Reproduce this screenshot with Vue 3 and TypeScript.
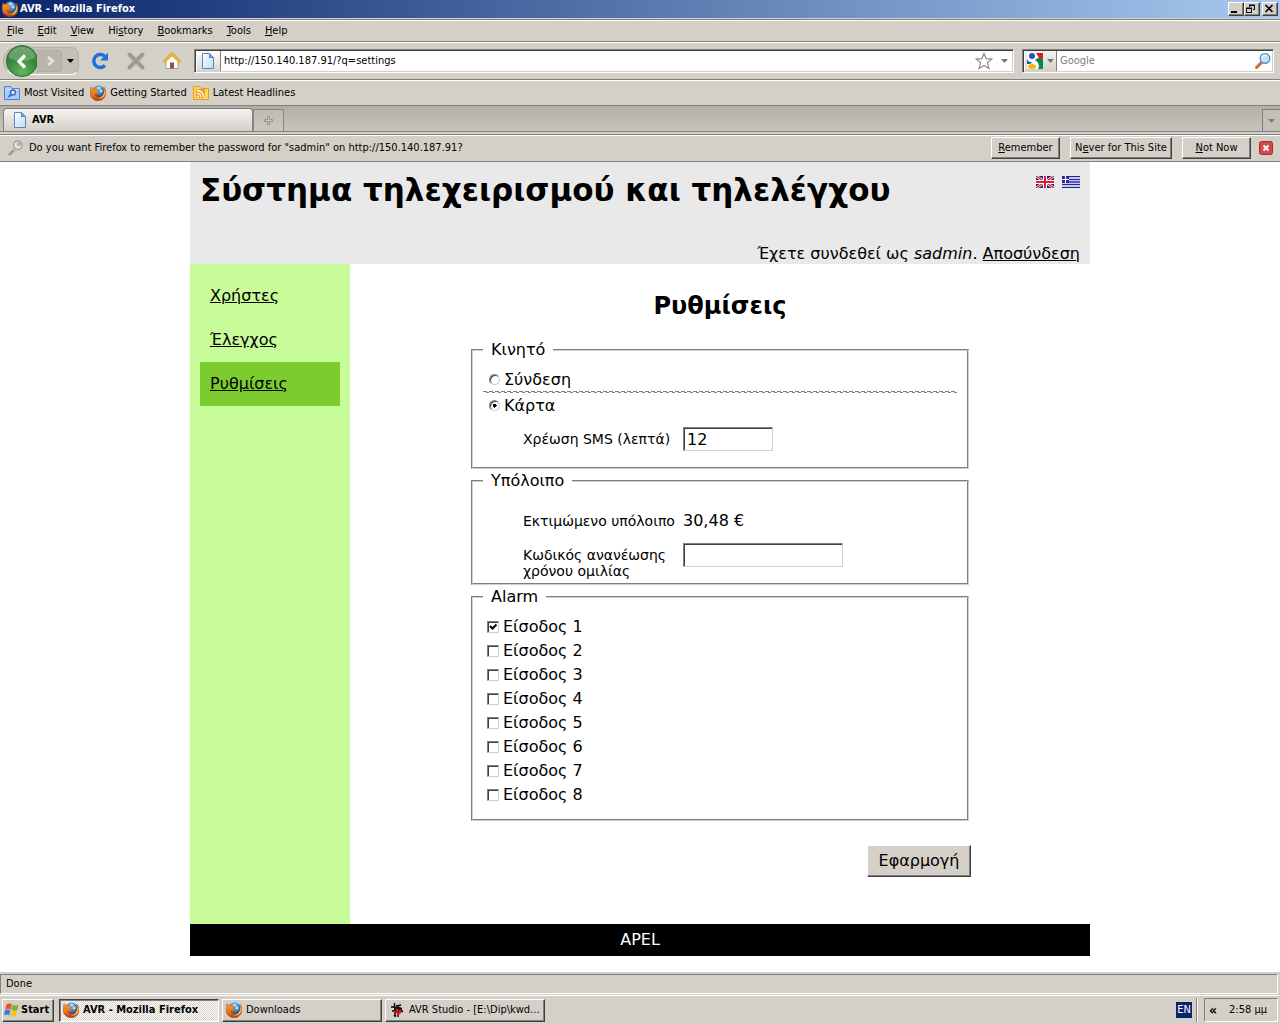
<script setup lang="ts">
import { ref } from 'vue'

interface MenuEntry { key: string; rest: string; before: string }

const menus: MenuEntry[] = [
  { before: '', key: 'F', rest: 'ile' },
  { before: '', key: 'E', rest: 'dit' },
  { before: '', key: 'V', rest: 'iew' },
  { before: 'Hi', key: 's', rest: 'tory' },
  { before: '', key: 'B', rest: 'ookmarks' },
  { before: '', key: 'T', rest: 'ools' },
  { before: '', key: 'H', rest: 'elp' },
]

const bookmarks = [
  { label: 'Most Visited', icon: 'smart-folder' },
  { label: 'Getting Started', icon: 'firefox' },
  { label: 'Latest Headlines', icon: 'feed' },
]

const tasks = [
  { label: 'AVR - Mozilla Firefox', icon: 'firefox', active: true },
  { label: 'Downloads', icon: 'firefox', active: false },
  { label: 'AVR Studio - [E:\\Dip\\kwd...', icon: 'bug', active: false },
]

const sections = [
  { label: 'Χρήστες', current: false },
  { label: 'Έλεγχος', current: false },
  { label: 'Ρυθμίσεις', current: true },
]

const url = ref('http://150.140.187.91/?q=settings')
const search = ref('')
const mode = ref('card')
const smsPrice = ref('12')
const renewCode = ref('')
const alarms = ref(Array.from({ length: 8 }, (_, i) => ({ id: i + 1, on: i === 0 })))
</script>

<template>
  <svg class="defs" aria-hidden="true">
    <defs>
      <radialGradient id="g-globe" cx="0.45" cy="0.3" r="0.7">
        <stop offset="0" stop-color="#9fdcf7" />
        <stop offset="0.5" stop-color="#3a8fd6" />
        <stop offset="1" stop-color="#14306f" />
      </radialGradient>
      <linearGradient id="g-fox" x1="0" y1="0" x2="0" y2="1">
        <stop offset="0" stop-color="#f0a030" />
        <stop offset="0.6" stop-color="#e8731a" />
        <stop offset="1" stop-color="#b83a10" />
      </linearGradient>
      <radialGradient id="g-back" cx="0.5" cy="0.85" r="0.85">
        <stop offset="0" stop-color="#5fb85a" />
        <stop offset="0.6" stop-color="#35853a" />
        <stop offset="1" stop-color="#4c8f50" />
      </radialGradient>
      <linearGradient id="g-page" x1="0" y1="0" x2="1" y2="1">
        <stop offset="0" stop-color="#ffffff" />
        <stop offset="1" stop-color="#bcdcf8" />
      </linearGradient>
      <symbol id="firefox" viewBox="0 0 16 16">
        <circle cx="8.4" cy="7" r="6.4" fill="url(#g-globe)" />
        <path d="M8 1.8l2.5.4-.6 1.6-2 .6zM10.5 4.5l2 .5-.5 2.5-2-.5z" fill="#bdeafa" />
        <path d="M1.200 1.400C.3 3.600 0 5.700.1 8c.2 4.600 3.600 7.800 8 7.800s7.700-3.200 7.800-7.500c.1-2.600-.6-4.700-2.200-6.300.6 1.700.8 3 .3 4.500-.2 3.400-2.300 5.500-5.200 5.500-2.300 0-3.600-1.300-3.800-2.900 1.200.6 2.200.3 3.200-.5l1.300-.4c-.1-.7-1-1.200-2-1.200.1-.9.700-1.500 1.500-2C7.800 5 6.700 4.500 5.900 3.600 4.800 2.900 3.700 3 2.800 3.600 1.900 3 1.400 2.300 1.200 1.400z" fill="url(#g-fox)" stroke="#9c3a12" stroke-width=".4" />
        <path d="M14.300 5c.4 4-1.800 7.800-5.800 8.200 3 1 6-1.300 6.400-4.500.1-1.400 0-2.600-.6-3.700z" fill="#fbd25c" />
      </symbol>
      <symbol id="page" viewBox="0 0 16 16">
        <path d="M2.500.5h7l4 4v11h-11z" fill="url(#g-page)" stroke="#5a86b8" />
        <path d="M9.500.5v4h4z" fill="#6ea7e0" stroke="#5a86b8" />
      </symbol>
      <symbol id="smart-folder" viewBox="0 0 16 16">
        <path d="M.5 1.500h6l1.500 2h7.500v11H.5z" fill="#a9cbfb" stroke="#4a80dc" />
        <path d="M1.500 4.500h13" stroke="#d9e9ff" />
        <circle cx="9" cy="7.500" r="2.500" fill="#dcebff" stroke="#3b68b8" stroke-width="1.400" />
        <path d="M7 9.500L4.500 12" stroke="#3b68b8" stroke-width="1.800" />
      </symbol>
      <symbol id="feed" viewBox="0 0 16 16">
        <path d="M.5 1.500h6l1.500 2h7.500v11H.5z" fill="#ffd75a" stroke="#dda21c" />
        <path d="M3 4h9v9H3z" fill="#f49a2c" />
        <circle cx="5" cy="11.500" r="1" fill="#fff" />
        <path d="M4 8.300a4 4 0 0 1 4 4M4 5.500a7 7 0 0 1 7 7" fill="none" stroke="#fff" stroke-width="1.300" />
      </symbol>
      <symbol id="bug" viewBox="0 0 16 16">
        <path d="M5.500 1v4M2 5h4M7 4l5-1M5 9H3M6 10v5M7 14l-2-1M9 12v3M12 8l2 2" fill="none" stroke="#000" stroke-width="1.400" />
        <path d="M5 5l4-1 4 2v4l-4 2-4-3z" fill="#181818" />
        <path d="M7 7h2v1h3v3l-2 1.500-3-1.500z" fill="#e81010" />
        <path d="M9 9h1v1H9zM10 6h1v1h-1z" fill="#181818" />
      </symbol>
      <symbol id="windows" viewBox="0 0 16 16">
        <path d="M2.500 2.500C4.500 1 6 1.400 7.800 2.400L6.600 7.400C4.800 6.400 3.300 6.300 1.200 7.500z" fill="#e8542a" />
        <path d="M8.600 2.800c2 1 3.800 1 6-.3l-1.200 5.200c-2 1.200-3.800 1.200-6 .2z" fill="#74b82a" />
        <path d="M1 8.400c2-1.200 3.600-1.100 5.400-.1l-1.200 5c-1.800-1-3.400-1-5.200.1z" fill="#3f78e0" />
        <path d="M7.200 8.700c2 1 3.900 1 6-.2L12 13.700c-2 1.200-4 1.200-6 .1z" fill="#f8c418" />
      </symbol>
    </defs>
  </svg>

  <div class="desktop">
    <header class="titlebar">
      <svg class="icon"><use href="#firefox" /></svg>
      <span class="title">AVR - Mozilla Firefox</span>
      <button class="win" type="button" aria-label="Minimize">
        <svg viewBox="0 0 12 10"><path d="M2 8h6" stroke="#000" stroke-width="2" /></svg>
      </button>
      <button class="win" type="button" aria-label="Restore">
        <svg viewBox="0 0 12 10"><path d="M4.500 3V1.500h5v4H8M4 1h6M1.500 4.500h5v4h-5zM1 4h6" fill="none" stroke="#000" /></svg>
      </button>
      <button class="win close" type="button" aria-label="Close">
        <svg viewBox="0 0 12 10"><path d="M2.500 1l7 7M9.500 1l-7 7" stroke="#000" stroke-width="1.600" /></svg>
      </button>
    </header>

    <nav class="menubar">
      <a v-for="m in menus" :key="m.rest" href="#">{{ m.before }}<u>{{ m.key }}</u>{{ m.rest }}</a>
    </nav>

    <div class="navbar">
      <div class="history">
        <button class="back" type="button" aria-label="Back">
          <svg viewBox="0 0 34 34">
            <circle cx="17" cy="17" r="15.500" fill="url(#g-back)" stroke="#2f6e35" />
            <path d="M4 14a13 11 0 0 1 26 0c-8 4-18 4-26 0z" fill="#fff" opacity=".22" />
            <path d="M20 11.500l-6 6 6 6" fill="none" stroke="#fff" stroke-width="3.200" />
          </svg>
        </button>
        <button class="forward" type="button" aria-label="Forward">
          <svg viewBox="0 0 24 22"><path d="M11 6.500l5 4.500-5 4.500" fill="none" stroke="#e4e2de" stroke-width="3" /></svg>
        </button>
        <button class="recent" type="button" aria-label="Recent pages">
          <svg viewBox="0 0 7 4"><path d="M0 0h7L3.500 4z" fill="#000" /></svg>
        </button>
      </div>
      <button class="tool reload" type="button" aria-label="Reload">
        <svg viewBox="0 0 20 20">
          <path d="M15 14.500A6.500 6.500 0 1 1 14.500 5" fill="none" stroke="#1f6fe0" stroke-width="3.400" />
          <path d="M18 1.500v8h-8z" fill="#1f6fe0" />
        </svg>
      </button>
      <button class="tool" type="button" aria-label="Stop">
        <svg viewBox="0 0 20 20"><path d="M3.500 3.500l13 13M16.500 3.500l-13 13" stroke="#9c9a96" stroke-width="4" stroke-linecap="round" /></svg>
      </button>
      <button class="tool" type="button" aria-label="Home">
        <svg viewBox="0 0 20 20">
          <path d="M4 10v7.500h12V10l-6-6z" fill="#fdfdfd" stroke="#98a4b4" />
          <path d="M8 11.500h4v6H8z" fill="#8a5a34" />
          <path d="M1.800 11L10 3l8.200 8" fill="none" stroke="#d98a10" stroke-width="3" />
          <path d="M1.800 11L10 3l8.200 8" fill="none" stroke="#fcc63a" stroke-width="1.600" />
        </svg>
      </button>
      <div class="urlbox">
        <span class="identity"><svg class="icon"><use href="#page" /></svg></span>
        <input v-model="url" type="text" aria-label="Location">
        <svg class="star" viewBox="0 0 18 18"><path d="M9 1.500l2.200 5.200 5.600.4-4.300 3.700 1.400 5.600L9 13.400l-4.900 3 1.400-5.600L1.200 7.100l5.600-.4z" fill="#fff" stroke="#8a8a8a" stroke-width="1.200" /></svg>
        <svg class="arrow" viewBox="0 0 7 4"><path d="M0 0h7L3.500 4z" fill="#777" /></svg>
      </div>
      <div class="searchbox">
        <button class="engine" type="button" aria-label="Search engine">
          <svg class="icon" viewBox="0 0 16 16">
            <path d="M0 0h16v16H0z" fill="#fff" />
            <path d="M9 0h7v6l-4-1z" fill="#e8141c" />
            <path d="M8 7q4-4 8-1v10h-5q3-5-3-9z" fill="#0a8a3c" />
            <circle cx="5" cy="3" r="3" fill="#1c56c0" />
            <path d="M0 6q2 4 6 3L3 11H0z" fill="#1c56c0" />
            <ellipse cx="5" cy="13.500" rx="4" ry="2.500" fill="#f6b414" />
          </svg>
          <svg class="arrow" viewBox="0 0 7 4"><path d="M0 0h7L3.500 4z" fill="#777" /></svg>
        </button>
        <input v-model="search" type="text" placeholder="Google" aria-label="Search">
        <svg class="icon" viewBox="0 0 16 16">
          <path d="M6.500 9.500L1.500 14.500" stroke="#c0703a" stroke-width="3" stroke-linecap="round" />
          <circle cx="10" cy="5.500" r="4.800" fill="#bfe3fb" stroke="#5c8fcc" stroke-width="1.400" />
          <path d="M7 5a3 3 0 0 1 5-2" fill="none" stroke="#fff" stroke-width="1.400" />
        </svg>
      </div>
    </div>

    <nav class="bookmarks">
      <a v-for="b in bookmarks" :key="b.label" href="#">
        <svg class="icon"><use :href="'#' + b.icon" /></svg>{{ b.label }}
      </a>
    </nav>

    <div class="tabs">
      <button class="tab" type="button">
        <svg class="icon"><use href="#page" /></svg>AVR
      </button>
      <button class="newtab" type="button" aria-label="New tab">
        <svg viewBox="0 0 9 9"><path d="M3.500.5h2v3h3v2h-3v3h-2v-3h-3v-2h3z" fill="#c8c5c0" stroke="#8a8782" stroke-width=".8" /></svg>
      </button>
      <button class="alltabs" type="button" aria-label="List all tabs">
        <svg class="arrow" viewBox="0 0 7 4"><path d="M0 0h7L3.500 4z" fill="#807d78" /></svg>
      </button>
    </div>

    <div class="notice">
      <svg class="icon" viewBox="0 0 16 16">
        <path d="M7.500 8.500L1.500 14.500H4v-1.500h1.500v-1.500H7l2-2" fill="#e4e2de" stroke="#858585" />
        <circle cx="10.800" cy="5.200" r="4.300" fill="#e4e2de" stroke="#858585" />
        <circle cx="12" cy="4" r="1.400" fill="#fff" stroke="#858585" />
      </svg>
      <span class="question">Do you want Firefox to remember the password for "sadmin" on http://150.140.187.91?</span>
      <button class="raised small" type="button"><u>R</u>emember</button>
      <button class="raised wide" type="button">N<u>e</u>ver for This Site</button>
      <button class="raised small" type="button"><u>N</u>ot Now</button>
      <button class="dismiss" type="button" aria-label="Close notification">
        <svg viewBox="0 0 14 14">
          <rect x=".5" y=".5" width="13" height="13" rx="2" fill="#d8454a" stroke="#a02c34" />
          <path d="M4.500 4.500l5 5M9.500 4.500l-5 5" stroke="#fff" stroke-width="2" />
        </svg>
      </button>
    </div>

    <div class="viewport">
      <div class="site">
        <header class="masthead">
          <div class="top">
            <h1>Σύστημα τηλεχειρισμού και τηλελέγχου</h1>
            <div class="flags">
              <a href="#" aria-label="English">
                <svg viewBox="0 0 18 12">
                  <path d="M0 0h18v12H0z" fill="#26297a" />
                  <path d="M0 0l18 12M18 0L0 12" stroke="#fff" stroke-width="2.600" />
                  <path d="M0 0l18 12M18 0L0 12" stroke="#d8202c" stroke-width="1.200" />
                  <path d="M9 0v12M0 6h18" stroke="#fff" stroke-width="4" />
                  <path d="M9 0v12M0 6h18" stroke="#d8202c" stroke-width="2" />
                </svg>
              </a>
              <a href="#" aria-label="Ελληνικά">
                <svg viewBox="0 0 18 12">
                  <path d="M0 0h18v12H0z" fill="#fff" />
                  <path d="M0 .5h18M0 3.500h18M0 6h18M0 8.500h18M0 11.300h18" stroke="#24249c" stroke-width="1.300" />
                  <path d="M0 0h7v7H0z" fill="#24249c" />
                  <path d="M3.500 0v7M0 3.500h7" stroke="#fff" stroke-width="1.200" />
                </svg>
              </a>
            </div>
          </div>
          <p>Έχετε συνδεθεί ως <em>sadmin</em>. <a href="#">Αποσύνδεση</a></p>
        </header>

        <div class="body">
          <nav class="side">
            <a v-for="s in sections" :key="s.label" href="#" :class="{ current: s.current }">{{ s.label }}</a>
          </nav>
          <main>
            <h2>Ρυθμίσεις</h2>
            <form @submit.prevent>
              <fieldset>
                <legend>Κινητό</legend>
                <label class="radio"><input v-model="mode" type="radio" name="mode" value="connection">Σύνδεση</label>
                <hr>
                <label class="radio"><input v-model="mode" type="radio" name="mode" value="card">Κάρτα</label>
                <div class="fields card">
                  <div class="field">
                    <label for="sms">Χρέωση SMS (λεπτά)</label>
                    <input id="sms" v-model="smsPrice" class="short" type="text">
                  </div>
                </div>
              </fieldset>
              <fieldset>
                <legend>Υπόλοιπο</legend>
                <div class="fields balance">
                  <div class="field">
                    <span class="name">Εκτιμώμενο υπόλοιπο</span>
                    <span class="value">30,48 €</span>
                  </div>
                  <div class="field">
                    <label for="renew">Κωδικός ανανέωσης χρόνου ομιλίας</label>
                    <input id="renew" v-model="renewCode" class="long" type="text">
                  </div>
                </div>
              </fieldset>
              <fieldset class="alarm">
                <legend>Alarm</legend>
                <label v-for="a in alarms" :key="a.id" class="check"><input v-model="a.on" type="checkbox">Είσοδος {{ a.id }}</label>
              </fieldset>
              <button class="raised apply" type="submit">Εφαρμογή</button>
            </form>
          </main>
        </div>

        <footer>APEL</footer>
      </div>
    </div>

    <div class="status"><span>Done</span></div>

    <footer class="taskbar">
      <button class="raised start" type="button"><svg class="icon"><use href="#windows" /></svg>Start</button>
      <div class="tasks">
        <button v-for="t in tasks" :key="t.label" type="button" class="raised task" :class="{ active: t.active }">
          <svg class="icon"><use :href="'#' + t.icon" /></svg>{{ t.label }}
        </button>
      </div>
      <span class="lang">EN</span>
      <span class="divider"></span>
      <div class="tray"><b>«</b><span>2:58 μμ</span></div>
    </footer>
  </div>
</template>

<style>
body {
  margin: 0;
  background: #fff;
}
</style>

<style scoped>
* {
  box-sizing: border-box;
}

.defs {
  position: absolute;
  width: 0;
  height: 0;
}

.desktop {
  display: flex;
  flex-direction: column;
  min-height: 100vh;
  background: #d4d0c8;
  color: #000;
  font: 11px/14px "DejaVu Sans Condensed", "DejaVu Sans", sans-serif;
}

button,
input {
  margin: 0;
  padding: 0;
  border: 0;
  border-radius: 0;
  background: none;
  color: inherit;
  font: inherit;
  outline: 0;
}

a {
  color: inherit;
  text-decoration: none;
}

svg {
  display: block;
  flex: none;
}

.icon {
  width: 16px;
  height: 16px;
}

.arrow {
  width: 7px;
  height: 4px;
}

.raised {
  border: 1px solid;
  border-color: #fff #404040 #404040 #fff;
  background: #d4d0c8;
  box-shadow: inset -1px -1px #808080;
}

.titlebar {
  display: flex;
  align-items: center;
  height: 18px;
  padding: 0 2px;
  background: linear-gradient(to right, #0a246a, #a6caf0);
  color: #fff;
  font-weight: bold;
}

.title {
  flex: 1;
  margin-left: 2px;
}

.win {
  width: 16px;
  height: 14px;
  border: 1px solid;
  border-color: #fff #404040 #404040 #fff;
  background: #d4d0c8;
  box-shadow: inset -1px -1px #808080;
}

.win svg {
  width: 12px;
  height: 10px;
}

.win.close {
  margin-left: 2px;
}

.menubar,
.navbar {
  display: flex;
  align-items: center;
  border-bottom: 1px solid #808080;
  box-shadow: inset 0 1px #fff;
}

.menubar {
  height: 23px;
  margin-top: 1px;
  border-top: 1px solid #808080;
}

.menubar a {
  padding: 0 7px;
}

.navbar {
  height: 38px;
  padding: 0 6px 0 3px;
}

.history {
  display: flex;
  align-items: center;
  width: 76px;
  height: 28px;
  border: 1px solid #b5b1a9;
  border-bottom-color: #fff;
  border-radius: 14px 8px 8px 14px;
  background: #c4c0b8;
}

.back {
  margin-left: 1px;
}

.back svg {
  width: 34px;
  height: 34px;
}

.forward {
  margin-left: -2px;
  border: 1px solid #b0aca4;
  border-left: 0;
  border-radius: 0 4px 4px 0;
  background: #b9b5ad;
}

.forward svg {
  width: 24px;
  height: 20px;
}

.recent {
  padding: 0 5px;
}

.recent svg {
  width: 7px;
  height: 4px;
}

.tool {
  margin-left: 8px;
  padding: 0 4px;
}

.tool.reload {
  margin-left: 7px;
}

.tool svg {
  width: 20px;
  height: 20px;
}

.urlbox,
.searchbox {
  display: flex;
  align-items: center;
  height: 24px;
  margin-left: 8px;
  padding: 2px;
  border: 1px solid;
  border-color: #808080 #fff #fff #808080;
  background: #fff;
  box-shadow: inset 1px 1px #404040, inset -1px -1px #d4d0c8;
}

.urlbox {
  flex: 1;
}

.searchbox {
  width: 252px;
}

.urlbox input,
.searchbox input {
  flex: 1;
  min-width: 0;
  padding-left: 3px;
}

.searchbox input::placeholder {
  color: #808080;
  opacity: 1;
}

.identity {
  display: flex;
  align-items: center;
  width: 24px;
  height: 20px;
  padding-left: 3px;
  border-right: 1px solid #808080;
  background: linear-gradient(#fff, #d9d6d0);
}

.star {
  width: 18px;
  height: 18px;
}

.urlbox .arrow {
  margin: 0 3px 0 8px;
}

.engine {
  display: flex;
  align-items: center;
  gap: 4px;
  width: 32px;
  height: 20px;
  padding-left: 2px;
  border-right: 1px solid #808080;
  background: linear-gradient(#f4f3f1, #d4d0c8);
}

.bookmarks {
  display: flex;
  align-items: center;
  gap: 6px;
  height: 26px;
  padding: 0 4px;
  border-bottom: 1px solid #808080;
  box-shadow: inset 0 1px #fff;
}

.bookmarks a {
  display: flex;
  align-items: center;
  gap: 4px;
}

.tabs {
  display: flex;
  align-items: flex-end;
  height: 26px;
  padding-left: 3px;
  border-bottom: 1px solid #808080;
  background: linear-gradient(#b2aea6, #c9c5bd);
}

.tab {
  display: flex;
  align-items: center;
  gap: 4px;
  width: 250px;
  height: 23px;
  padding-left: 8px;
  border: 1px solid #808080;
  border-bottom: 0;
  border-radius: 4px 4px 0 0;
  background: linear-gradient(#f4f3f1, #d4d0c8);
  font-weight: bold;
}

.newtab {
  display: flex;
  align-items: center;
  justify-content: center;
  width: 31px;
  height: 22px;
  border: 1px solid #8c8881;
  border-bottom: 0;
  background: linear-gradient(#bfbbb3, #ccc8c0);
}

.newtab svg {
  width: 9px;
  height: 9px;
}

.alltabs {
  display: flex;
  align-items: center;
  justify-content: center;
  width: 18px;
  height: 22px;
  margin-left: auto;
  border: 1px solid #808080;
  border-width: 1px 0 0 1px;
  background: #c4c0b8;
}

.notice {
  display: flex;
  align-items: center;
  height: 28px;
  margin-top: 2px;
  padding: 0 7px;
  border-top: 1px solid #808080;
  border-bottom: 1px solid #808080;
  box-shadow: inset 0 1px #fff;
}

.question {
  flex: 1;
  margin-left: 6px;
}

.notice .raised {
  height: 22px;
  margin-right: 10px;
}

.notice .small {
  width: 69px;
}

.notice .wide {
  width: 102px;
}

.notice .dismiss {
  margin-left: -2px;
}

.dismiss svg {
  width: 14px;
  height: 14px;
}

.viewport {
  flex: 1;
  padding-bottom: 16px;
  background: #fff;
  font: 16px/20px "DejaVu Sans", Verdana, sans-serif;
}

.site {
  max-width: 900px;
  margin: 0 auto;
}

.masthead {
  display: flex;
  flex-direction: column;
  justify-content: space-between;
  min-height: 102px;
  padding: 8px 10px 0;
  background: #e9e9e9;
}

.top {
  display: flex;
  justify-content: space-between;
}

h1 {
  margin: 0;
  font-size: 31px;
  line-height: 40px;
}

.flags {
  display: flex;
  gap: 8px;
  padding-top: 6px;
}

.flags svg {
  width: 18px;
  height: 12px;
}

.masthead p {
  margin: 0;
  text-align: right;
}

.masthead p a,
.side a {
  text-decoration: underline;
}

.body {
  display: flex;
  min-height: 660px;
}

.side {
  width: 160px;
  padding: 10px;
  background: #c8fc98;
}

.side a {
  display: block;
  padding: 0 10px;
  line-height: 44px;
}

.side .current {
  background: #7ccc30;
}

main {
  flex: 1;
  padding-top: 26px;
}

h2 {
  margin: 0 0 18px;
  font-size: 24px;
  line-height: 32px;
  text-align: center;
}

form {
  max-width: 502px;
  margin: 0 auto;
}

fieldset {
  min-width: 0;
  margin: 0 2px 2px;
  padding: 8px 10px 0;
  border: 2px groove #d4d0c8;
}

legend {
  padding: 0 8px;
}

.radio,
.check {
  display: flex;
  align-items: center;
}

.radio {
  height: 23px;
  gap: 4px;
  padding-left: 6px;
}

hr {
  height: 2px;
  margin: 0 0 1px;
  border: 0;
  background:
    repeating-linear-gradient(to right, #808080 0 4px, transparent 4px 6px) 0 0 / 100% 1px no-repeat,
    repeating-linear-gradient(to right, transparent 0 3px, #808080 3px 6px) 0 1px / 100% 1px no-repeat;
}

.check {
  height: 24px;
  gap: 4px;
  padding-left: 4px;
}

.radio input,
.check input {
  appearance: none;
  width: 12px;
  height: 12px;
  border: 1px solid;
  border-color: #808080 #d4d0c8 #d4d0c8 #808080;
  background: #fff center no-repeat;
  box-shadow: inset 1px 1px #404040;
}

.radio input {
  width: 11px;
  height: 11px;
  border-radius: 50%;
}

.radio input:checked {
  background-image: radial-gradient(circle, #000 2px, transparent 2px);
}

.check input:checked {
  background-image: url("data:image/svg+xml,%3Csvg xmlns='http://www.w3.org/2000/svg' viewBox='0 0 10 10'%3E%3Cpath d='M2 4l2.500 2.500L8.500 2.500' fill='none' stroke='%23000' stroke-width='2'/%3E%3C/svg%3E");
}

.fields {
  display: flex;
  flex-direction: column;
  gap: 10px;
  padding-left: 40px;
}

.fields.card {
  padding-top: 10px;
  padding-bottom: 16px;
}

.fields.balance {
  padding-top: 10px;
  padding-bottom: 4px;
}

.field {
  display: flex;
  align-items: flex-start;
  min-height: 24px;
}

.field label,
.field .name {
  width: 160px;
  padding-top: 4px;
  font-size: 14px;
  line-height: 16px;
}

.value {
  padding-top: 2px;
}

.field input {
  height: 24px;
  padding: 0 3px;
  border: 1px solid;
  border-color: #808080 #d4d0c8 #d4d0c8 #808080;
  background: #fff;
  box-shadow: inset 1px 1px #404040;
}

.short {
  width: 90px;
}

.long {
  width: 160px;
}

.alarm {
  padding-bottom: 12px;
}

.apply {
  display: block;
  width: 104px;
  height: 32px;
  margin: 24px 0 0 auto;
}

.site footer {
  background: #000;
  color: #fff;
  line-height: 32px;
  text-align: center;
}

.status {
  padding: 2px 2px 1px 0;
  border-bottom: 1px solid #fff;
}

.status span {
  display: block;
  padding: 1px 5px;
  border: 1px solid;
  border-color: #808080 #fff #fff #808080;
  line-height: 16px;
}

.taskbar {
  display: flex;
  align-items: center;
  height: 28px;
  padding: 0 2px;
}

.taskbar .raised {
  display: flex;
  align-items: center;
  gap: 4px;
  height: 23px;
  padding: 0 3px;
  white-space: nowrap;
}

.taskbar .start {
  gap: 1px;
  width: 52px;
  padding: 0 1px;
  font-weight: bold;
}

.tasks {
  display: flex;
  flex: 1;
  gap: 3px;
  margin-left: 5px;
}

.taskbar .task {
  width: 160px;
}

.taskbar .active {
  border-color: #404040 #fff #fff #404040;
  background: repeating-conic-gradient(#fff 0 25%, #d4d0c8 0 50%) 0 0 / 2px 2px;
  box-shadow: inset 1px 1px #808080;
  font-weight: bold;
}

.lang {
  width: 16px;
  background: #0a246a;
  color: #fff;
  line-height: 16px;
  text-align: center;
}

.divider {
  width: 2px;
  height: 24px;
  margin: 0 6px 0 4px;
  border-left: 1px solid #808080;
  background: #fff;
}

.tray {
  display: flex;
  align-items: center;
  justify-content: space-between;
  width: 74px;
  height: 24px;
  padding: 0 10px 0 4px;
  border: 1px solid;
  border-color: #808080 #fff #fff #808080;
  white-space: nowrap;
}

.tray b {
  font-size: 14px;
}
</style>
